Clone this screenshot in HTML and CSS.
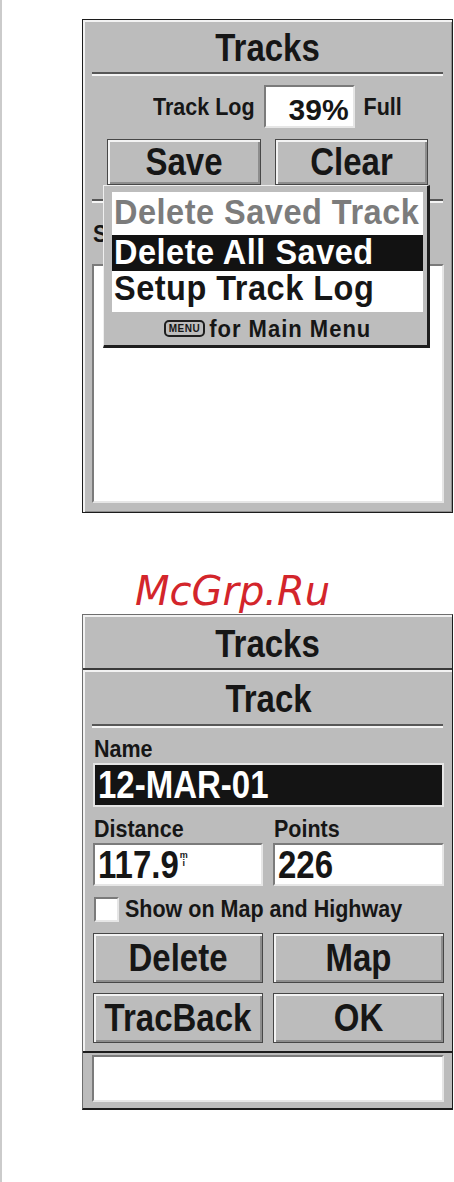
FILE: index.html
```html
<!DOCTYPE html>
<html lang="en">
<head>
    <meta charset="UTF-8">
    <title>Tracks</title>
    <link rel="stylesheet" href="styles.css">
</head>
<body>
<div class="page">
    <section class="unit tracks-page">
        <h1 class="title">Tracks</h1>
        <hr class="rule">
        <div class="log-row">
            <span class="lbl">Track Log</span>
            <span class="field pct">39%</span>
            <span class="lbl">Full</span>
        </div>
        <div class="btn-row">
            <button class="key"><span>Save</span></button>
            <button class="key"><span>Clear</span></button>
        </div>
        <hr class="rule rule-low">
        <div class="lbl saved">Saved Tracks</div>
        <div class="list field"></div>

        <!-- options menu opened over the page -->
        <div class="menu">
            <ul class="opts">
                <li class="off"><span>Delete Saved Track</span></li>
                <li class="on"><span>Delete All Saved</span></li>
                <li class="last"><span>Setup Track Log</span></li>
            </ul>
            <div class="hint"><span class="menu-key">MENU</span><span class="lbl">for Main Menu</span></div>
        </div>
    </section>

    <p class="mark">McGrp.Ru</p>

    <section class="unit track-page">
        <div class="tab">
            <h1 class="title">Tracks</h1>
        </div>
        <div class="sheet">
            <h2 class="title">Track</h2>
            <hr class="rule rule-sheet">
            <div class="lbl name-lbl">Name</div>
            <div class="name-field"><span class="digits">12-MAR-01</span></div>
            <div class="pair">
                <div>
                    <div class="lbl">Distance</div>
                    <div class="field num"><span class="digits">117.9</span><span class="mi">m<br>i</span></div>
                </div>
                <div>
                    <div class="lbl">Points</div>
                    <div class="field num"><span class="digits">226</span></div>
                </div>
            </div>
            <div class="check-row">
                <span class="field box"></span>
                <span class="lbl">Show on Map and Highway</span>
            </div>
            <div class="keys">
                <button class="key"><span>Delete</span></button>
                <button class="key"><span>Map</span></button>
                <button class="key"><span>TracBack</span></button>
                <button class="key"><span>OK</span></button>
            </div>
        </div>
        <div class="status">
            <div class="field status-box"></div>
        </div>
    </section>
</div>
</body>
</html>
```

FILE: styles.css
```css
* {
    margin: 0;
    padding: 0;
    box-sizing: border-box;
}

body {
    background: #fff;
    color: #161616;
    font-family: "Liberation Sans", Arial, sans-serif;
    font-weight: bold;
}

.page {
    min-height: 1182px;
    border-left: 2px solid #cbcbcb;
    padding: 19px 0 0 80px;
}

/* device screens */
.unit {
    position: relative;
    width: 371px;
    background: #bcbcbc;
    border: 1px solid #1c1c1c;
}

.tracks-page {
    padding: 8px 0 9px;
    box-shadow: inset 2px 2px 0 #f2f2f2, inset -1px -1px 0 #8e8e8e;
}

/* the unit's font is tall and narrow, so glyphs get stretched */
.title {
    font-size: 33px;
    line-height: 40px;
    text-align: center;
    font-weight: bold;
    transform: scaleY(1.2);
}

.key span,
.digits {
    display: inline-block;
    transform: scaleY(1.2);
}

.lbl {
    font-size: 21.5px;
    line-height: 26px;
    white-space: nowrap;
    transform: scaleY(1.12);
}

.rule {
    border: 0;
    border-top: 2px solid #575757;
    border-bottom: 2px solid #f4f4f4;
    margin: 4px 9px 0;
}

.rule-low {
    margin-top: 14px;
}

/* white sunken boxes */
.field {
    background: #fff;
    border: 2px solid;
    border-color: #7b7b7b #e6e6e6 #e6e6e6 #7b7b7b;
}

.log-row {
    display: flex;
    align-items: center;
    gap: 9px;
    height: 43px;
    margin-top: 9px;
    padding-left: 70px;
}

.pct {
    width: 91px;
    height: 43px;
    padding: 4px 4px 0 0;
    font-size: 30px;
    line-height: 37px;
    text-align: right;
}

.btn-row {
    display: grid;
    grid-template-columns: 154px 153px;
    gap: 14px;
    margin-top: 11px;
    padding-left: 24px;
}

.key {
    height: 46px;
    font: inherit;
    font-size: 33px;
    line-height: 40px;
    color: #161616;
    background: #bcbcbc;
    border: 1px solid #474747;
    box-shadow: inset 2px 2px 0 #f3f3f3, inset -2px -2px 0 #8d8d8d;
}

.saved {
    margin: 18px 0 0 10px;
}

.list {
    height: 239px;
    margin: 17px 8px 0 9px;
}

/* popup menu */
.menu {
    position: absolute;
    left: 20px;
    top: 165px;
    width: 327px;
    background: #bdbdbd;
    border-style: solid;
    border-width: 1px 3px 3px 1px;
    border-color: #efefef #1e1e1e #1e1e1e #efefef;
    padding: 6px 4px 0 8px;
}

.opts {
    list-style: none;
    background: #fff;
    font-size: 32.5px;
    letter-spacing: .5px;
}

.opts li {
    height: 41px;
    line-height: 41px;
    padding-left: 2px;
    white-space: nowrap;
}

.opts li span {
    display: inline-block;
    transform: scaleY(1.06);
}

.opts .off {
    color: #7c7c7c;
}

.opts .on {
    height: 38px;
    line-height: 38px;
    background: #121212;
    color: #fff;
    box-shadow: inset 0 2px 0 #fff;
}

.opts .last {
    line-height: 34px;
}

.hint {
    height: 33px;
    display: flex;
    align-items: center;
    justify-content: center;
    gap: 4px;
}

.hint .lbl {
    font-size: 22px;
    letter-spacing: 1px;
}

.menu-key {
    font-size: 10px;
    line-height: 13px;
    letter-spacing: .5px;
    padding: 0 3px;
    border: 2px solid #1e1e1e;
    border-radius: 5px;
}

.mark {
    margin: 55px 0 0 53px;
    font: italic 40px/46px "DejaVu Sans", sans-serif;
    color: #d3252b;
}

/* track details */
.track-page {
    border-color: #6e6e6e #1c1c1c #1c1c1c #6e6e6e;
    border-bottom-width: 2px;
}

.tab {
    padding: 9px 0 4px;
    border-bottom: 2px solid #3a3a3a;
    box-shadow: inset 2px 2px 0 #f2f2f2;
}

.sheet {
    padding: 9px 8px 8px 10px;
    border-bottom: 2px solid #1c1c1c;
    box-shadow: inset 2px 2px 0 #f2f2f2;
}

.rule-sheet {
    margin: 5px 1px 0 -1px;
}

.name-lbl {
    margin: 8px 0 0 1px;
}

.name-field {
    height: 44px;
    margin-top: 1px;
    padding-left: 3px;
    background: #141414;
    border: 2px solid #e4e4e4;
    color: #fff;
    font-size: 33px;
    line-height: 40px;
}

.pair {
    display: grid;
    grid-template-columns: 170px 171px;
    gap: 10px;
    margin-top: 9px;
}

.pair .lbl {
    margin-left: 1px;
}

.num {
    height: 43px;
    margin-top: 1px;
    padding-left: 3px;
    font-size: 33px;
    line-height: 39px;
}

.mi {
    display: inline-block;
    vertical-align: top;
    margin: 6px 0 0 1px;
    font-size: 9px;
    line-height: 8px;
    text-align: center;
}

.check-row {
    display: flex;
    align-items: center;
    gap: 6px;
    height: 25px;
    margin-top: 11px;
    padding-left: 1px;
}

.box {
    flex-shrink: 0;
    width: 25px;
    height: 25px;
}

.check-row .lbl {
    line-height: 25px;
}

.keys {
    display: grid;
    grid-template-columns: 170px 171px;
    gap: 10px;
    margin-top: 11px;
}

.keys .key {
    height: 50px;
}

.status {
    padding: 2px 8px 6px 9px;
}

.status-box {
    height: 47px;
}
```
